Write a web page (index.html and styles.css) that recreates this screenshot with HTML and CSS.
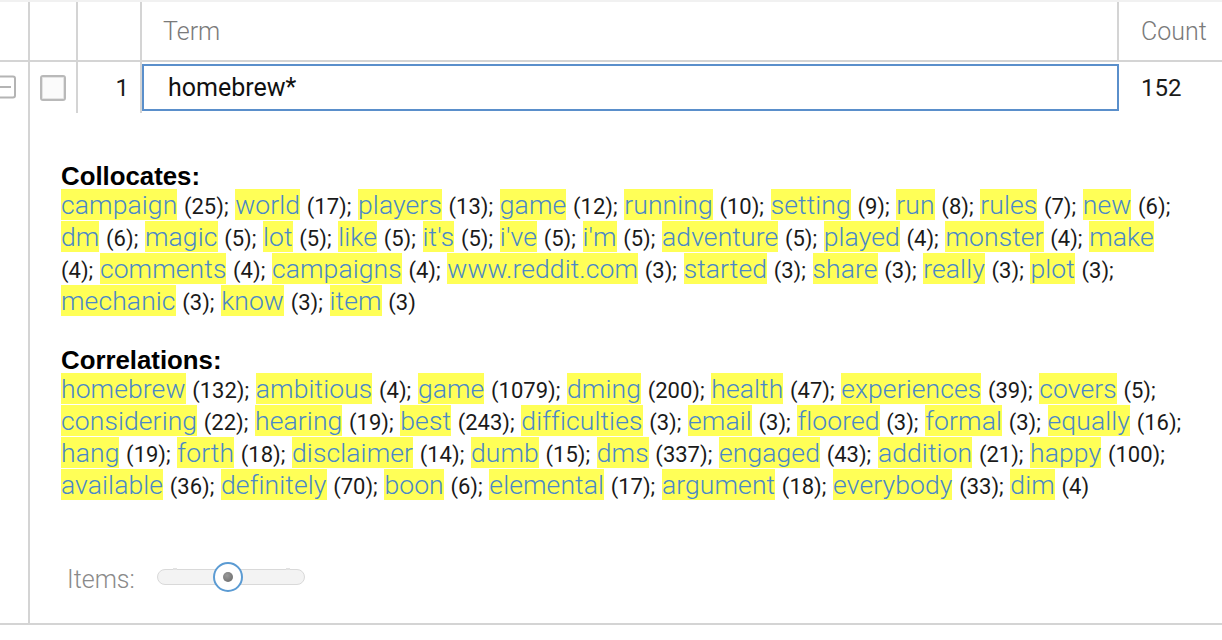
FILE: index.html
```html
<!DOCTYPE html>
<html lang="en">
<head>
<meta charset="utf-8">
<title>Terms</title>
<link rel="stylesheet" href="styles.css">
</head>
<body>
<div class="grid">
  <div class="hdr">
    <div class="cell c-exp"></div>
    <div class="cell c-chk"></div>
    <div class="cell c-num"></div>
    <div class="cell c-term hdr-text">Term</div>
    <div class="cell c-count hdr-text">Count</div>
  </div>
  <div class="row">
    <div class="cell c-exp">
      <svg class="expander" width="16" height="24" viewBox="0 0 16 24"><rect x="-7" y="1.5" width="22" height="21" rx="2" fill="none" stroke="#b4b4b4" stroke-width="2"/><line x1="0" y1="12" x2="11" y2="12" stroke="#b4b4b4" stroke-width="2"/></svg>
    </div>
    <div class="cell c-chk"><span class="checkbox"></span></div>
    <div class="cell c-num row-text">1</div>
    <div class="cell c-term-input"><input class="term-input" type="text" value="homebrew*"></div>
    <div class="cell c-count row-text">152</div>
  </div>
  <div class="detail">
    <div class="section">
      <div class="sec-title">Collocates:</div>
      <div class="line"><span class="w">campaign</span> (25); <span class="w">world</span> (17); <span class="w">players</span> (13); <span class="w">game</span> (12); <span class="w">running</span> (10); <span class="w">setting</span> (9); <span class="w">run</span> (8); <span class="w">rules</span> (7); <span class="w">new</span> (6);</div>
      <div class="line"><span class="w">dm</span> (6); <span class="w">magic</span> (5); <span class="w">lot</span> (5); <span class="w">like</span> (5); <span class="w">it's</span> (5); <span class="w">i've</span> (5); <span class="w">i'm</span> (5); <span class="w">adventure</span> (5); <span class="w">played</span> (4); <span class="w">monster</span> (4); <span class="w">make</span></div>
      <div class="line">(4); <span class="w">comments</span> (4); <span class="w">campaigns</span> (4); <span class="w">www.reddit.com</span> (3); <span class="w">started</span> (3); <span class="w">share</span> (3); <span class="w">really</span> (3); <span class="w">plot</span> (3);</div>
      <div class="line"><span class="w">mechanic</span> (3); <span class="w">know</span> (3); <span class="w">item</span> (3)</div>
    </div>
    <div class="section">
      <div class="sec-title">Correlations:</div>
      <div class="line"><span class="w">homebrew</span> (132); <span class="w">ambitious</span> (4); <span class="w">game</span> (1079); <span class="w">dming</span> (200); <span class="w">health</span> (47); <span class="w">experiences</span> (39); <span class="w">covers</span> (5);</div>
      <div class="line"><span class="w">considering</span> (22); <span class="w">hearing</span> (19); <span class="w">best</span> (243); <span class="w">difficulties</span> (3); <span class="w">email</span> (3); <span class="w">floored</span> (3); <span class="w">formal</span> (3); <span class="w">equally</span> (16);</div>
      <div class="line"><span class="w">hang</span> (19); <span class="w">forth</span> (18); <span class="w">disclaimer</span> (14); <span class="w">dumb</span> (15); <span class="w">dms</span> (337); <span class="w">engaged</span> (43); <span class="w">addition</span> (21); <span class="w">happy</span> (100);</div>
      <div class="line"><span class="w">available</span> (36); <span class="w">definitely</span> (70); <span class="w">boon</span> (6); <span class="w">elemental</span> (17); <span class="w">argument</span> (18); <span class="w">everybody</span> (33); <span class="w">dim</span> (4)</div>
    </div>
    <div class="items">
      <span class="items-label">Items:</span>
      <div class="slider">
        <span class="tick tick-a"></span>
        <span class="tick tick-b"></span>
        <span class="thumb"><span class="thumb-dot"></span></span>
      </div>
    </div>
  </div>
</div>
</body>
</html>
```

FILE: styles.css
```css
* { box-sizing: border-box; }

body {
  margin: 0;
  background: #ffffff;
  font-family: Roboto, "Liberation Sans", Arial, sans-serif;
  color: #1a1a1a;
}

.grid {
  width: 1222px;
}

.hdr {
  display: flex;
  height: 62px;
  border-top: 2px solid #f1f1f1;
  border-bottom: 2px solid #d4d4d4;
}

.row {
  display: flex;
  height: 51px;
}

.cell {
  display: flex;
  align-items: center;
}

.c-exp {
  width: 30px;
  border-right: 2px solid #d4d4d4;
  overflow: hidden;
}

.c-chk {
  width: 48px;
  border-right: 2px solid #d4d4d4;
  justify-content: center;
}

.c-num {
  width: 64px;
  border-right: 2px solid #d4d4d4;
  justify-content: flex-end;
  padding-right: 11px;
}

.c-term {
  width: 977px;
  border-right: 2px solid #d4d4d4;
  padding-left: 21px;
}

.c-term-input {
  width: 977px;
  padding: 2px 0;
}

.c-count {
  flex: 1;
  padding-left: 22px;
}

.hdr-text {
  font-size: 25px;
  font-weight: 300;
  color: #7a7a7a;
}

.row-text {
  font-size: 24px;
  font-weight: 400;
  color: #1a1a1a;
}

.expander {
  display: block;
  margin-top: -1px;
}

.checkbox {
  display: block;
  width: 26px;
  height: 26px;
  border: 2px solid #b9b9b9;
  border-radius: 3px;
  background: #fbfbfb;
  box-shadow: inset 0 0 0 1px #e4e4e4;
  margin-top: 1px;
}

.term-input {
  display: block;
  width: 100%;
  height: 47px;
  margin: 0;
  border: 2px solid #5a8fcb;
  outline: none;
  padding: 0 0 0 24px;
  font-family: Roboto, "Liberation Sans", Arial, sans-serif;
  font-size: 25px;
  font-weight: 400;
  color: #111111;
  background: #ffffff;
}

.detail {
  border-bottom: 2px solid #d4d4d4;
  padding: 48px 0 30px 61px;
  background-image: linear-gradient(#d4d4d4, #d4d4d4);
  background-size: 2px 100%;
  background-repeat: no-repeat;
  background-position: 28px 0;
}

.section {
  margin-bottom: 26px;
}

.sec-title {
  font-family: "Liberation Sans", Arial, sans-serif;
  font-weight: 700;
  font-size: 25.8px;
  line-height: 30px;
  color: #000000;
}

.line {
  font-size: 22px;
  line-height: 32px;
  white-space: nowrap;
  color: #1a1a1a;
  word-spacing: 1.2px;
}

.w {
  font-size: 26.5px;
  font-weight: 300;
  line-height: 1;
  letter-spacing: 0.1px;
  color: #4a88c9;
  background: #ffff57;
  word-spacing: 0;
}

.items {
  display: flex;
  align-items: center;
  height: 32px;
  margin-top: 58px;
  padding-left: 6px;
  gap: 22px;
}

.items-label {
  font-size: 25px;
  font-weight: 300;
  color: #8a8a8a;
  padding-top: 4px;
}

.slider {
  position: relative;
  width: 148px;
  height: 16px;
  border: 1px solid #d9d9d9;
  border-radius: 8px;
  background: #f3f3f3;
}

.tick {
  position: absolute;
  top: -2px;
  width: 4px;
  height: 2px;
  background: #e2e2e2;
}

.tick-a { left: 15px; }
.tick-b { left: 128px; }

.thumb {
  position: absolute;
  left: 55px;
  top: -8px;
  width: 30px;
  height: 30px;
  border-radius: 50%;
  border: 2px solid #5b9bd3;
  background: #ffffff;
  display: flex;
  align-items: center;
  justify-content: center;
}

.thumb-dot {
  width: 10px;
  height: 10px;
  border-radius: 50%;
  background: radial-gradient(circle at 40% 35%, #9a9a9a, #666666);
}
```
